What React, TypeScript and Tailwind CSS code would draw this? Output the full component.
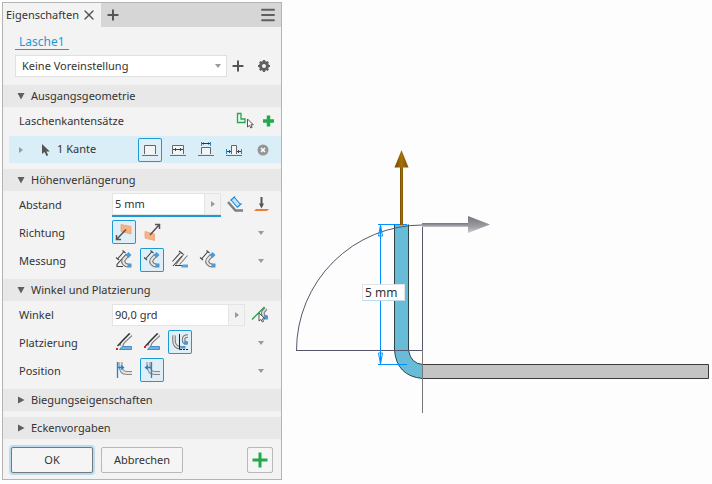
import React from 'react';
import { Menu, Plus, X } from 'lucide-react';

type Children = { children: React.ReactNode };

const Icon = ({ children }: Children) => (
  <svg viewBox="0 0 24 24" fill="none" className="h-6 w-6 shrink-0" aria-hidden="true">
    {children}
  </svg>
);

const Caret = ({ open }: { open?: boolean }) => (
  <svg viewBox="0 0 8 8" className="h-2 w-2 shrink-0 fill-[#5f5f5f]" aria-hidden="true">
    {open ? <path d="M0.5 1h7L4 7.5z" /> : <path d="M1 0.5v7L7.5 4z" />}
  </svg>
);

const Section = ({ title, open, children }: { title: string; open?: boolean; children?: React.ReactNode }) => (
  <section>
    <h2 className="bg-[#e8e8e8]">
      <button className="flex h-[22px] w-full items-center gap-1.5 pl-3.5" aria-expanded={!!open}>
        <Caret open={open} />
        {title}
      </button>
    </h2>
    {children}
  </section>
);

const Row = ({ label, htmlFor, more, children }: { label: string; htmlFor?: string; more?: boolean; children: React.ReactNode }) => (
  <div className="flex h-7 items-center pr-2 pl-4">
    {htmlFor ? (
      <label htmlFor={htmlFor} className="w-[93px] shrink-0">{label}</label>
    ) : (
      <span className="w-[93px] shrink-0">{label}</span>
    )}
    <div className={more ? 'flex flex-1 items-center gap-1 pb-0.5' : 'flex flex-1 items-center gap-1'}>{children}</div>
    {more && (
      <button aria-label={label + ' erweitern'} className="flex h-6 w-6 items-center justify-center">
        <svg viewBox="0 0 6 4" className="h-1 w-1.5 fill-[#9a9a9a]"><path d="M0 0h6L3 4z" /></svg>
      </button>
    )}
  </div>
);

const Tool = ({ label, active, children }: { label: string; active?: boolean; children: React.ReactNode }) => (
  <button
    aria-label={label}
    aria-pressed={!!active}
    className={
      active
        ? 'flex h-6 w-6 shrink-0 items-center justify-center rounded-xs bg-[#e0eff7] ring-1 ring-[#1c9ad6] ring-inset'
        : 'flex h-6 w-6 shrink-0 items-center justify-center'
    }
  >
    <Icon>{children}</Icon>
  </button>
);

const ValueBox = ({ id, value, focused }: { id: string; value: string; focused?: boolean }) => (
  <div className={focused ? 'w-[109px] shrink-0 border-b-2 border-[#1c9ad6]' : 'flex-1'}>
    <div className="flex h-[22px] border border-[#e4e4e4]">
      <input id={id} defaultValue={value} className="w-0 flex-1 bg-white px-0.5 outline-none" />
      <button aria-label="Werte" className="flex w-4 items-center justify-center border-l border-[#e4e4e4]">
        <svg viewBox="0 0 4 6" className="h-1.5 w-1 fill-[#9a9a9a]"><path d="M0 0v6L4 3z" /></svg>
      </button>
    </div>
  </div>
);

const Cursor = ({ x, y }: { x: number; y: number }) => (
  <path transform={`translate(${x} ${y})`} d="M0 0v8l2-1.6 1.3 2.6 1.3-.6-1.2-2.6h2.4z" fill="#fff" stroke="#555" strokeWidth="1" />
);

const Bend = () => (
  <>
    <path d="M15.5 7.5l-3 3q-2.500 3 0 5.500 1.200 1.500 4 1.500" stroke="#777" strokeWidth="4" />
    <path d="M15.500 7.500l-3 3q-2.500 3 0 5.500 1.200 1.500 4 1.500" stroke="#e6e6e6" strokeWidth="2" />
    <path d="M16.500 4l3 3-3 3-3-3zM15.500 15.500h4v4h-4z" fill="#4f9ad2" />
  </>
);

const Dimension = () => (
  <path d="M5.500 11l6.500-7.500M4 9.500l3 2.500M10.500 2.500l3 2.500" stroke="#444" strokeWidth="1.100" />
);

const Flange = () => (
  <>
    <path d="M9.500 16q0-2.500 2-4.500L19 4.500" stroke="#777" strokeWidth="4" />
    <path d="M9.500 16q0-2.500 2-4.500L19 4.500" stroke="#ececec" strokeWidth="2" />
    <path d="M5.500 16L17.500 3.500" stroke="#333" strokeWidth="1.300" />
    <path d="M10 16.500h9.500v3H7.500z" fill="#6cb4e4" stroke="#4a8dbf" />
  </>
);

const PlateBend = () => (
  <>
    <path d="M8.500 4v3q0 8 6.500 8H20" stroke="#888" strokeWidth="4" />
    <path d="M8.500 4v3q0 8 6.500 8H20" stroke="#e4e4e4" strokeWidth="2" />
  </>
);

const Properties = () => (
  <aside className="m-0.5 flex w-[280px] shrink-0 flex-col self-start border border-[#b4b4b4] bg-[#f3f3f3] text-[11px] text-[#333]">
    <header className="flex h-6 items-center bg-[#d6d6d6]">
      <div className="flex h-full w-[98px] items-center justify-between bg-[#f3f3f3] pr-1 pl-[3px]">
        Eigenschaften
        <button aria-label="Schließen"><X className="h-4 w-4" color="#555" strokeWidth={2} /></button>
      </div>
      <button aria-label="Neues Register" className="ml-1"><Plus className="h-4 w-4" color="#555" strokeWidth={3} /></button>
      <button aria-label="Menü" className="mr-1 ml-auto"><Menu className="h-[18px] w-[18px]" color="#606060" strokeWidth={2.5} /></button>
    </header>

    <div className="flex flex-col items-start pt-2 pr-1 pb-[7px] pl-3">
      <a href="#lasche" className="border-b border-[#1c9ad6] px-1 text-xs leading-[14px] text-[#1c9ad6]">Lasche1</a>
      <div className="mt-1 flex w-full items-center">
        <div className="relative w-[212px] shrink-0">
          <select aria-label="Voreinstellung" className="block h-[22px] w-full appearance-none border border-[#e0e0e0] bg-white px-1.5 text-[11px]">
            <option>Keine Voreinstellung</option>
          </select>
          <svg viewBox="0 0 6 4" className="pointer-events-none absolute top-[9px] right-1.5 h-1 w-1.5 fill-[#9a9a9a]"><path d="M0 0h6L3 4z" /></svg>
        </div>
        <button aria-label="Voreinstellung hinzufügen" className="ml-[3px]"><Plus className="h-4 w-4" color="#555" strokeWidth={3} /></button>
        <button aria-label="Einstellungen" className="ml-1.5">
          <Icon>
            <circle cx="12" cy="12" r="3.500" stroke="#606060" strokeWidth="3" />
            <path d="M12 6v3M12 15v3M6 12h3M15 12h3M7.800 7.800l2 2M14.200 14.200l2 2M7.800 16.200l2-2M14.200 9.800l2-2" stroke="#606060" strokeWidth="2.200" />
          </Icon>
        </button>
      </div>
    </div>

    <Section title="Ausgangsgeometrie" open>
      <div className="flex h-7 items-center pl-4">
        <span className="flex-1">Laschenkantensätze</span>
        <Tool label="Kanten wählen">
          <path d="M4.500 4.500h3.500v5.500h4v3.500H4.500z" stroke="#22a94c" strokeWidth="1.300" />
          <Cursor x={14.5} y={10} />
        </Tool>
        <Tool label="Kantensatz hinzufügen">
          <path d="M11.500 6.500v11M6 12h11" stroke="#22a94c" strokeWidth="3.500" />
        </Tool>
      </div>
      <div className="mt-px mb-1.5 ml-1.5 flex h-[27px] items-center gap-1 bg-[#d9eef7] pr-[7px]">
        <div className="flex flex-1 items-center pl-2">
          <svg viewBox="0 0 4 6" className="mr-2.5 ml-0.5 h-1.5 w-1 fill-[#9a9a9a]"><path d="M0 0v6L4 3z" /></svg>
          <svg viewBox="0 0 12 14" className="mr-1 ml-2 h-3.5 w-3"><path d="M1 1v10l2.600-2 1.800 4 1.800-.8-1.800-3.800h3.400z" fill="#555" /></svg>
          1 Kante
        </div>
        <Tool label="Volle Breite" active>
          <path d="M6.500 16V7.500h11V16" stroke="#666" fill="#f4f4f4" />
          <path d="M4 17.500h16" stroke="#1886d9" />
        </Tool>
        <Tool label="Breite">
          <path d="M6.500 16V7.500h11V16" stroke="#666" fill="#f4f4f4" />
          <path d="M7 11.500h10M9.500 10v3M14.500 10v3" stroke="#444" />
          <path d="M4 17.500h16" stroke="#1886d9" />
        </Tool>
        <Tool label="Versatz">
          <path d="M7.500 16V9.500h9V16" stroke="#666" fill="#f4f4f4" />
          <path d="M7.500 4v4M16.500 4v4M4 17.500h16" stroke="#1886d9" />
          <path d="M8 5.500h8M9.500 4.500v2M14.500 4.500v2" stroke="#333" />
        </Tool>
        <Tool label="Von bis">
          <path d="M9.500 16V7.500h5V16" stroke="#666" fill="#f4f4f4" />
          <path d="M4.500 11v5M19.500 11v5M4 17.500h16" stroke="#1886d9" />
          <path d="M5 13.500h4M15 13.500h4M7.500 12v3M16.500 12v3" stroke="#444" />
        </Tool>
        <Tool label="Entfernen">
          <circle cx="13" cy="12" r="5.500" fill="#959595" />
          <path d="M11 10l4 4M15 10l-4 4" stroke="#fff" strokeWidth="1.500" />
        </Tool>
      </div>
    </Section>

    <Section title="Höhenverlängerung" open>
      <div className="pb-1">
        <Row label="Abstand" htmlFor="abstand">
          <ValueBox id="abstand" value="5 mm" focused />
          <div className="flex gap-0.5">
            <Tool label="Messen">
              <path d="M3 9l7.500 8.500H18" stroke="#808080" strokeWidth="2.500" />
              <path d="M8 6l6 7" stroke="#c5e3f8" strokeWidth="4" />
              <path d="M6.500 7.500l6 7M9.500 4.500l6 7M5.500 7.500l4.500-4M12 14.500l4.500-4" stroke="#1886d9" strokeWidth="1.100" />
            </Tool>
            <Tool label="Bis Fläche">
              <path d="M10.500 4v9" stroke="#555" strokeWidth="2" />
              <path d="M8 10.500h5l-2.500 5z" fill="#555" />
              <path d="M5 16h13l-2 2H3z" fill="#ed7d31" />
            </Tool>
          </div>
        </Row>
        <Row label="Richtung" more>
          <Tool label="Seite 1" active>
            <path d="M9 4.500l10 2v7.500l-10-2.500z" fill="#f7b183" stroke="#eda274" strokeWidth="0.800" />
            <path d="M14 9.500L5 19M4.500 15v4.500H9" stroke="#555" strokeWidth="1.500" />
          </Tool>
          <Tool label="Seite 2">
            <path d="M5 11.500l9.500 2.500v6.500L5 18z" fill="#f7b183" stroke="#eda274" strokeWidth="0.800" />
            <path d="M10 15l9-10M15 4.500h4.500V9" stroke="#555" strokeWidth="1.500" />
          </Tool>
        </Row>
        <Row label="Messung" more>
          <Tool label="Äußere Schnittlinie">
            <path d="M14.500 6L5 16.500v2h6" stroke="#444" strokeWidth="1.100" />
            <Bend />
            <Dimension />
          </Tool>
          <Tool label="Innere Schnittlinie" active>
            <Bend />
            <Dimension />
          </Tool>
          <Tool label="Parallel">
            <path d="M8 16.500L16 6M11.500 16.500L19.500 7.500" stroke="#777" strokeWidth="1.100" />
            <path d="M4.500 13.500l8-9M7 17.500h13" stroke="#444" strokeWidth="1.100" />
            <path d="M11 3l4 3M5 18l9-10" stroke="#444" strokeWidth="1.100" />
            <path d="M13 19.500h7v-3h-5z" fill="#5ba4da" />
          </Tool>
          <Tool label="Tangential">
            <Bend />
            <Dimension />
          </Tool>
        </Row>
      </div>
    </Section>

    <Section title="Winkel und Platzierung" open>
      <div className="pb-1">
        <Row label="Winkel" htmlFor="winkel">
          <ValueBox id="winkel" value="90,0 grd" />
          <Tool label="Winkel wählen">
            <path d="M17 5.500l-3 3.500q-1 3 2 5h2" stroke="#777" strokeWidth="3.500" />
            <path d="M17 5.500l-3 3.500q-1 3 2 5h2" stroke="#e4e4e4" strokeWidth="1.500" />
            <path d="M15 12.500h4v4h-4z" fill="#4a99d6" />
            <path d="M3 16.500L15.500 4" stroke="#22a94c" strokeWidth="1.500" />
            <Cursor x={10} y={10} />
          </Tool>
        </Row>
        <Row label="Platzierung" more>
          <Tool label="Innerhalb">
            <Flange />
            <path d="M4 18h2v2H4z" fill="#e02020" />
          </Tool>
          <Tool label="Außerhalb">
            <Flange />
            <path d="M4 16h2v2H4z" fill="#e02020" />
          </Tool>
          <Tool label="Tangential zur Seite" active>
            <path d="M6 5.500v5q0 6.500 6.500 7.500M20 6q-4.500 0-4.500 3.500T19 13" stroke="#777" strokeWidth="3.500" />
            <path d="M6 5.500v5q0 6.500 6.500 7.500M20 6q-4.500 0-4.500 3.500T19 13" stroke="#e4e4e4" strokeWidth="1.500" />
            <path d="M16 11.500h4v3h-4zM12.500 16h5v2.500h-5z" fill="#4a99d6" />
            <path d="M11.500 4v15.500" stroke="#222" />
            <path d="M12 19.500h8" stroke="#222" strokeDasharray="2 1" />
          </Tool>
        </Row>
        <Row label="Position" more>
          <Tool label="Innen">
            <PlateBend />
            <path d="M5.500 4v16M5.500 9.500H11M9 7.500l2.500 2L9 11.500" stroke="#1886d9" strokeWidth="1.300" />
          </Tool>
          <Tool label="Außen" active>
            <PlateBend />
            <path d="M11.500 4v16M11 9.500H5.500M8 7.500l-2.500 2 2.500 2" stroke="#1886d9" strokeWidth="1.300" />
          </Tool>
        </Row>
      </div>
    </Section>

    <div className="flex flex-col gap-1.5">
      <Section title="Biegungseigenschaften" />
      <Section title="Eckenvorgaben" />
    </div>

    <footer className="flex items-center gap-2 px-2 pt-2 pb-1.5">
      <button className="h-[26px] w-[82px] rounded-xs border border-[#777] bg-[#f5f5f5] ring-2 ring-[#b8dcee]">OK</button>
      <button className="h-[26px] w-[82px] rounded-xs border border-[#b8b8b8] bg-[#f5f5f5]">Abbrechen</button>
      <button aria-label="Anwenden" className="ml-auto flex h-[26px] w-[26px] items-center justify-center rounded-xs border border-[#b8b8b8] bg-[#f5f5f5]">
        <Icon><path d="M12 4.500v15M4.500 12h15" stroke="#22a94c" strokeWidth="3" /></Icon>
      </button>
    </footer>
  </aside>
);

const Viewport = () => (
  <main className="relative w-[428px] shrink-0">
    <svg viewBox="284 0 428 484" className="block h-[484px] w-[428px]" fill="none" role="img" aria-label="Laschenvorschau">
      <defs>
        <linearGradient id="height" x1="0" x2="1">
          <stop offset="0" stopColor="#6f4700" />
          <stop offset="0.500" stopColor="#a87008" />
          <stop offset="1" stopColor="#7a4f02" />
        </linearGradient>
        <linearGradient id="depth" x1="0" x2="0" y1="0" y2="1">
          <stop offset="0" stopColor="#77757c" />
          <stop offset="0.600" stopColor="#9c9aa2" />
          <stop offset="1" stopColor="#cac9d0" />
        </linearGradient>
      </defs>
      <path d="M422 364.500h286.500v14H422z" fill="#c4c4c4" stroke="#3a3a3a" />
      <path d="M394.500 224.500V350q2 26 28 28.500v-14q-11.500-1-14-14V224.500z" fill="#68bcd8" />
      <path d="M394.500 224.500V350q2 26 28 28.500M408.500 224.500v126q2.500 13 14 14" stroke="#2d4547" />
      <path d="M296.500 350.500A126 125.500 0 0 1 422.500 225M296 350.500h126.500V225" stroke="#55586c" />
      <path d="M422.500 351v62" stroke="#777" />
      <path d="M378 224.500h29M380.500 225v139M378 364.500h29M378.500 236l2-11 2 11zM378.500 353l2 11 2-11z" stroke="#0090ff" />
      <path d="M400 167h3v58h-3z" fill="url(#height)" />
      <path d="M401.500 150l7 17.500h-14z" fill="url(#height)" />
      <path d="M422 223h46v4h-46z" fill="url(#depth)" />
      <path d="M468 216l22 8.500-22 8.500z" fill="url(#depth)" />
    </svg>
    <input aria-label="Höhe" defaultValue="5 mm" className="absolute top-[284px] left-[78px] h-[17px] w-[43px] border border-[#e2e2e2] border-b-[#b8dcee] bg-white px-0.5 text-xs text-[#333] outline-none" />
  </main>
);

export default function App() {
  return (
    <div className="flex min-h-screen bg-[#fdfdfd] font-['Noto_Sans',sans-serif]">
      <Properties />
      <Viewport />
    </div>
  );
}
